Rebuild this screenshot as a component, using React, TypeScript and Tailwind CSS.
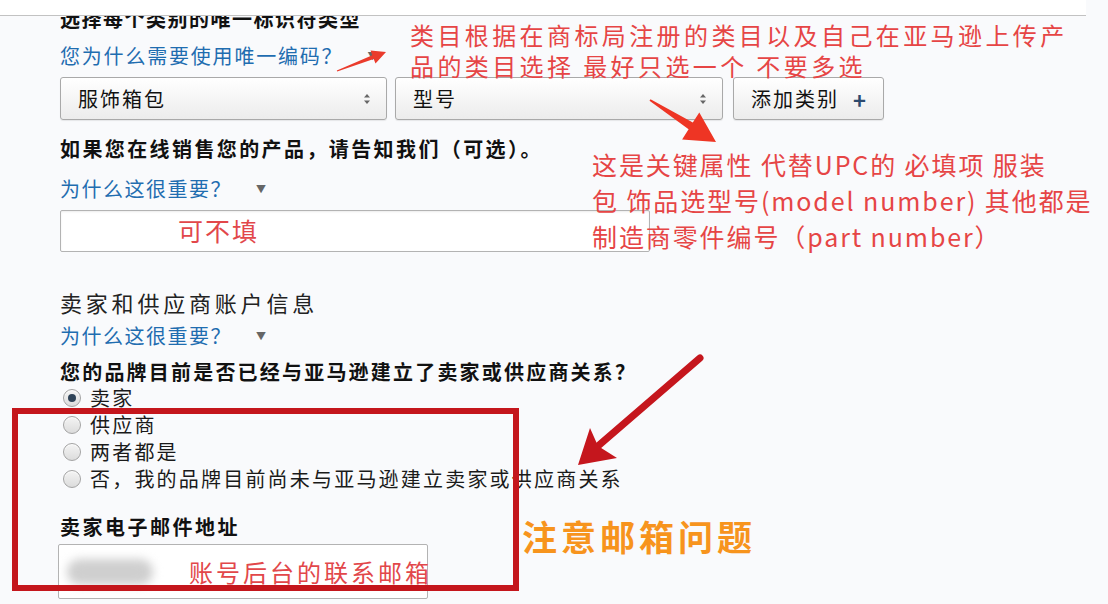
import React from 'react';

const Caret = () => <span className="ml-[24px] text-[10px] text-[#666] align-top">▼</span>;

const SelectArrows = () => (
    <svg width="8" height="12" viewBox="0 0 8 12" className="shrink-0">
        <path d="M4 1 L7 4.5 H1 Z" fill="#666" />
        <path d="M4 11 L7 7.5 H1 Z" fill="#666" />
    </svg>
);

function Select({ label, width }: { label: string; width: string }) {
    return (
        <div className={`${width} h-[43px] flex items-center justify-between pl-[17px] pr-[15px] rounded-[3px] border border-[#a9a9a9] bg-gradient-to-b from-white to-[#ececec] shadow-[0_1px_1px_rgba(0,0,0,0.08)]`}>
            <span className="text-[20px] tracking-[2px] text-[#111]">{label}</span>
            <SelectArrows />
        </div>
    );
}

function Radio({ label, checked }: { label: string; checked?: boolean }) {
    return (
        <div className="h-[27px] flex items-center gap-[9px] pl-[3px]">
            <span className="w-[18px] h-[18px] rounded-full border border-[#a3a3a3] bg-gradient-to-b from-[#f4f4f4] to-[#dcdcdc] flex items-center justify-center shadow-[inset_0_1px_1px_rgba(255,255,255,0.9)]">
                {checked && <span className="w-[8px] h-[8px] rounded-full bg-[#2f4358]" />}
            </span>
            <span className="text-[20px] tracking-[2.2px] text-[#1a1a1a] leading-[27px] whitespace-nowrap">{label}</span>
        </div>
    );
}

export default function App() {
    return (
        <div className="relative w-[1108px] h-[604px] overflow-hidden bg-[#f9fafc] font-['Noto_Sans_CJK_SC',sans-serif]">
            {/* top strip */}
            <div className="h-[16px] bg-white border-b border-[#c2c2c2] mr-[22px]" />

            <div className="pl-[60px] flex flex-col">
                {/* clipped heading */}
                <div className="h-[19px] overflow-hidden">
                    <div className="-mt-[9px] text-[20px] leading-[24px] font-bold tracking-[1.5px] text-[#111]">
                        选择每个类别的唯一标识符类型
                    </div>
                </div>

                <div className="h-[42px] leading-[42px] text-[20px] tracking-[1.8px] text-[#1f6db0] whitespace-nowrap">
                    您为什么需要使用唯一编码？<Caret />
                </div>

                <div className="h-[43px] flex items-center">
                    <Select label="服饰箱包" width="w-[327px]" />
                    <div className="w-[8px]" />
                    <Select label="型号" width="w-[328px]" />
                    <div className="w-[10px]" />
                    <div className="w-[151px] h-[43px] flex items-center justify-center gap-[14px] rounded-[3px] border border-[#a9a9a9] bg-gradient-to-b from-white to-[#ececec] shadow-[0_1px_1px_rgba(0,0,0,0.08)]">
                        <span className="text-[20px] tracking-[2px] text-[#111]">添加类别</span>
                        <span className="text-[22px] font-bold text-[#2c4a6e] leading-none">+</span>
                    </div>
                </div>

                <div className="h-[9px]" />
                <div className="h-[40px] leading-[40px] text-[20px] font-bold tracking-[2.4px] text-[#111] whitespace-nowrap">
                    如果您在线销售您的产品，请告知我们（可选）。
                </div>
                <div className="h-[41px] leading-[39px] text-[20px] tracking-[1.5px] text-[#1f6db0]">
                    为什么这很重要？<Caret />
                </div>

                <div className="w-[590px] h-[42px] bg-white border border-[#b3b3b3] rounded-[2px] shadow-[inset_0_1px_2px_rgba(0,0,0,0.08)] flex items-center pl-[117px]">
                    <span className="text-[25px] tracking-[2px] text-[#e2474a]">可不填</span>
                </div>

                <div className="h-[30px]" />
                <div className="h-[40px] leading-[40px] text-[22px] tracking-[3.8px] text-[#222]">
                    卖家和供应商账户信息
                </div>
                <div className="h-[27px] leading-[27px] text-[20px] tracking-[1.5px] text-[#1f6db0]">
                    为什么这很重要？<Caret />
                </div>
                <div className="h-[10px]" />
                <div className="h-[25px] leading-[25px] text-[20px] font-bold tracking-[2.2px] text-[#111] whitespace-nowrap">
                    您的品牌目前是否已经与亚马逊建立了卖家或供应商关系？
                </div>

                <Radio label="卖家" checked />
                <Radio label="供应商" />
                <Radio label="两者都是" />
                <Radio label="否，我的品牌目前尚未与亚马逊建立卖家或供应商关系" />

                <div className="h-[22px]" />
                <div className="h-[26px] leading-[26px] text-[20px] font-bold tracking-[2.5px] text-[#111]">
                    卖家电子邮件地址
                </div>
                <div className="h-[4px]" />
                <div className="w-[370px] h-[55px] -ml-[2px] bg-white border border-[#b3b3b3] rounded-[2px] flex items-center">
                    <div className="ml-[8px] w-[86px] h-[26px] rounded-full bg-[#cfcfcf] blur-[5px] shrink-0" />
                    <span className="ml-[36px] text-[24px] tracking-[3px] text-[#e2474a] whitespace-nowrap">账号后台的联系邮箱</span>
                </div>
            </div>

            {/* annotations */}
            <div className="absolute left-[410px] top-[19px] text-[24px] leading-[31px] tracking-[3.4px] text-[#e64545] pointer-events-none whitespace-nowrap">
                <div>类目根据在商标局注册的类目以及自己在亚马逊上传产</div>
                <div>品的类目选择 最好只选一个 不要多选</div>
            </div>

            <div className="absolute left-[592px] top-[146px] text-[25px] leading-[36px] tracking-[1.9px] text-[#e64545] pointer-events-none whitespace-nowrap">
                <div>这是关键属性 代替UPC的 必填项 服装</div>
                <div>包 饰品选型号(model number) 其他都是</div>
                <div>制造商零件编号（part number）</div>
            </div>

            <div className="absolute left-[522px] top-[511px] text-[35px] leading-[50px] font-bold tracking-[4px] text-[#f7941d] pointer-events-none">
                注意邮箱问题
            </div>

            <div className="absolute left-[12px] top-[408px] w-[507px] h-[183px] border-[6px] border-[#c4161c] pointer-events-none" />

            <svg className="absolute inset-0 pointer-events-none" width="1108" height="604" viewBox="0 0 1108 604">
                <polygon
                    points="336.8,70.5 372.3,55.2 370.5,50.6 386,52 375.5,63.6 373.7,58.9 337.2,71.5"
                    fill="#ea3b2c"
                />
                <polygon
                    points="650.5,99.2 692.8,122.5 699.3,112.4 716,142 682.1,139.4 688.6,129.3 649.5,100.8"
                    fill="#ee3524"
                />
                <line x1="700" y1="358" x2="598" y2="446" stroke="#c5161d" strokeWidth="7" strokeLinecap="round" />
                <polygon points="590,428 598,446 617,458 578,465" fill="#c5161d" />
            </svg>
        </div>
    );
}
